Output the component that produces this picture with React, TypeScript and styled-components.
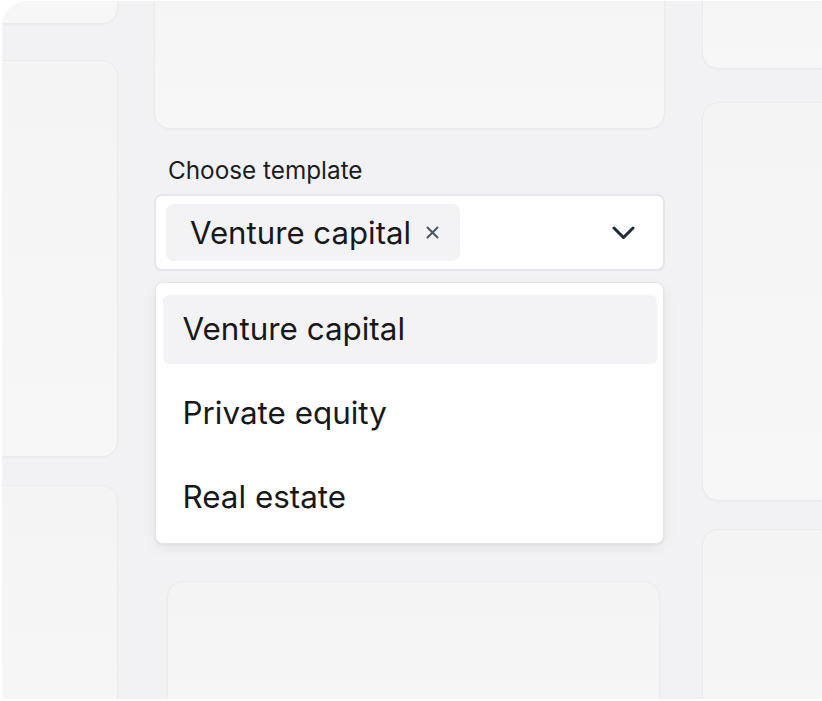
import React from "react";
import styled, { createGlobalStyle } from "styled-components";

const Global = createGlobalStyle`
  html, body { margin: 0; padding: 0; background: #ffffff; overflow: hidden; }
  body { font-family: Inter, "Noto Sans", sans-serif; }
  * { box-sizing: border-box; }
`;

const Frame = styled.div`
  margin: 1px 0 0 2px;
  width: 860px;
  height: 698px;
  background: #f2f2f4;
  border-top-left-radius: 26px;
  overflow: hidden;
`;

const Grid = styled.div`
  display: grid;
  grid-template-columns: 138px 511px 160px;
  column-gap: 36.5px;
  margin-left: -22.5px;
  align-items: start;
`;

const Column = styled.div`
  display: flex;
  flex-direction: column;
`;

const Card = styled.div<{ $h: number; $mt: number; $ml?: number; $mr?: number }>`
  height: ${(p) => p.$h}px;
  margin-top: ${(p) => p.$mt}px;
  margin-left: ${(p) => p.$ml ?? 0}px;
  margin-right: ${(p) => p.$mr ?? 0}px;
  border-radius: 16px;
  border: 1.5px solid #ebebed;
  background: linear-gradient(180deg, #f4f4f5 0%, #f7f7f8 100%);
  box-shadow: 0 1px 2px rgba(0, 0, 0, 0.03);
  flex-shrink: 0;
`;

const Field = styled.div`
  display: flex;
  flex-direction: column;
  margin-top: 27px;
`;

const Label = styled.div`
  font-size: 24.3px;
  color: #1c1c1f;
  line-height: 29px;
  padding-left: 14px;
  margin-bottom: 9px;
`;

const SelectBox = styled.div`
  height: 77px;
  background: #ffffff;
  border: 2px solid #e6e6ea;
  border-radius: 8px;
  display: flex;
  align-items: center;
  padding: 0 28px 0 10px;
  justify-content: space-between;
`;

const Chip = styled.div`
  height: 57px;
  display: flex;
  align-items: center;
  gap: 15px;
  padding: 0 21px 0 24px;
  background: #f3f3f5;
  border-radius: 8px;
  font-size: 31.2px;
  color: #18181b;
`;

const Menu = styled.div`
  margin: 11px 1px 0 1px;
  background: #ffffff;
  border: 1.5px solid #e5e5e8;
  border-radius: 8px;
  box-shadow: 0 4px 14px rgba(0, 0, 0, 0.06), 0 1px 3px rgba(0, 0, 0, 0.05);
  padding: 11.5px 6.5px;
  display: flex;
  flex-direction: column;
  gap: 15px;
`;

const Item = styled.div<{ $active?: boolean }>`
  height: 69px;
  display: flex;
  align-items: center;
  padding-left: 20px;
  border-radius: 6px;
  background: ${(p) => (p.$active ? "#f3f3f5" : "transparent")};
  font-size: 31.4px;
  color: #18181b;
`;

const Close = () => (
  <svg width="13" height="13" viewBox="0 0 13 13" fill="none">
    <path d="M1.5 1.5L11.5 11.5M11.5 1.5L1.5 11.5" stroke="#4b5563" strokeWidth="2" strokeLinecap="round" />
  </svg>
);

const Chevron = () => (
  <svg width="23" height="14" viewBox="0 0 23 14" fill="none">
    <path d="M2 2L11.5 11.5L21 2" stroke="#1f2937" strokeWidth="3" strokeLinecap="round" strokeLinejoin="round" />
  </svg>
);

export default function App() {
  const items = ["Venture capital", "Private equity", "Real estate"];
  return (
    <>
      <Global />
      <Frame>
        <Grid>
          <Column>
            <Card $h={120} $mt={-97} />
            <Card $h={397} $mt={36} />
            <Card $h={300} $mt={28} />
          </Column>
          <Column>
            <Card $h={220} $mt={-92} />
            <Field>
              <Label>Choose template</Label>
              <SelectBox>
                <Chip>
                  Venture capital
                  <Close />
                </Chip>
                <Chevron />
              </SelectBox>
              <Menu>
                {items.map((t, i) => (
                  <Item key={t} $active={i === 0}>
                    {t}
                  </Item>
                ))}
              </Menu>
            </Field>
            <Card $h={200} $mt={37} $ml={13} $mr={5} />
          </Column>
          <Column>
            <Card $h={120} $mt={-52} />
            <Card $h={399} $mt={33} />
            <Card $h={300} $mt={28} />
          </Column>
        </Grid>
      </Frame>
    </>
  );
}
